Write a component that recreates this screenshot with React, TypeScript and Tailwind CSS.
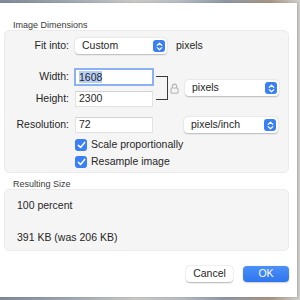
import React from 'react';

const font = { fontFamily: '"Liberation Sans", Arial, sans-serif' };

function Stepper() {
  return (
    <span className="flex h-[12px] w-[12px] items-center justify-center rounded-[3px] bg-[#3a7ff3]">
      <svg width="7" height="9" viewBox="0 0 7 9" fill="none">
        <path d="M1.2 3.4L3.5 1.2L5.8 3.4M1.2 5.6L3.5 7.8L5.8 5.6" stroke="white" strokeWidth="1.2" strokeLinecap="round" strokeLinejoin="round" />
      </svg>
    </span>
  );
}

function Popup({ label, width }: { label: string; width: string }) {
  return (
    <div className={`flex h-[16px] items-center justify-between rounded-[4px] bg-white pl-[7px] pr-[2px] shadow-[0_0.5px_1.5px_rgba(0,0,0,0.25)] ${width}`}>
      <span className="text-[10.5px] text-[#262626]">{label}</span>
      <Stepper />
    </div>
  );
}

function Field({ value, focused }: { value: string; focused?: boolean }) {
  return (
    <div
      className={`flex h-[16px] w-[78px] items-center bg-white pl-[3px] text-[10.5px] text-[#262626] ${
        focused ? 'outline-[2.5px] outline-solid outline-[#8db2f4] -outline-offset-[1px] border border-[#b9c9e6]' : 'border border-[#e2e2e2] border-t-[#d2d2d2]'
      }`}
    >
      {focused ? <span className="bg-[#b6cff7] leading-[12px]">{value}</span> : value}
    </div>
  );
}

function Check({ label }: { label: string }) {
  return (
    <div className="flex h-[12px] items-center gap-[4px] pl-[70px]">
      <span className="flex h-[12px] w-[12px] items-center justify-center rounded-[3px] bg-[#3a7ff3]">
        <svg width="9" height="8" viewBox="0 0 9 8" fill="none">
          <path d="M1.3 4.2L3.5 6.4L7.7 1.4" stroke="white" strokeWidth="1.5" strokeLinecap="round" strokeLinejoin="round" />
        </svg>
      </span>
      <span className="text-[10.5px] text-[#262626]">{label}</span>
    </div>
  );
}

function Label({ children }: { children: React.ReactNode }) {
  return <span className="w-[64px] text-right text-[10.5px] text-[#262626]">{children}</span>;
}

export default function App() {
  return (
    <div
      className="h-[300px] w-[300px] overflow-hidden pt-[3px]"
      style={{ ...font, background: 'linear-gradient(90deg, #7f8a99 0%, #9aa3ae 20%, #c9c9c6 45%, #b8bcc2 60%, #8e98a5 75%, #a89682 90%, #d0cfcc 100%)' }}
    >
      <div className="flex h-[294px] w-[297px] flex-col bg-white pt-[17px] shadow-[1px_0_2px_rgba(0,0,0,0.15)]">
        <div className="h-[10px] pl-[13px] text-[9px] leading-[10px] text-[#3a3a3a]">Image Dimensions</div>

        <div className="ml-[4px] flex h-[143px] w-[285px] flex-col rounded-[5px] border border-[#ebebeb] bg-[#f5f5f5]">
          <div className="mt-[7px] flex h-[16px] items-center gap-[6px]">
            <Label>Fit into:</Label>
            <Popup label="Custom" width="w-[92px]" />
            <span className="ml-[3px] text-[10.5px] text-[#262626]">pixels</span>
          </div>

          <div className="mt-[15px] flex items-center">
            <div className="flex flex-col gap-[6px]">
              <div className="flex items-center gap-[6px]">
                <Label>Width:</Label>
                <Field value="1608" focused />
              </div>
              <div className="flex items-center gap-[6px]">
                <Label>Height:</Label>
                <Field value="2300" />
              </div>
            </div>
            <div className="ml-[3px] h-[24px] w-[12px] border-y border-r border-[#3a3a3a]" />
            <svg className="ml-[2px]" width="9" height="11" viewBox="0 0 9 11" fill="none">
              <path d="M2.3 5V3.3a2.2 2.2 0 0 1 4.4 0V5" stroke="#b5b5b5" strokeWidth="1.1" />
              <rect x="1" y="5" width="7" height="5.3" rx="1" stroke="#b5b5b5" strokeWidth="1.1" />
            </svg>
            <div className="ml-[6px]">
              <Popup label="pixels" width="w-[94px]" />
            </div>
          </div>

          <div className="mt-[10px] flex h-[16px] items-center gap-[6px]">
            <Label>Resolution:</Label>
            <Field value="72" />
            <div className="ml-[25px]">
              <Popup label="pixels/inch" width="w-[94px]" />
            </div>
          </div>

          <div className="mt-[6px] flex flex-col gap-[5px]">
            <Check label="Scale proportionally" />
            <Check label="Resample image" />
          </div>
        </div>

        <div className="mt-[6px] h-[10px] pl-[13px] text-[9px] leading-[10px] text-[#3a3a3a]">Resulting Size</div>

        <div className="ml-[4px] flex h-[62px] w-[285px] flex-col rounded-[5px] border border-[#ebebeb] bg-[#f5f5f5] pl-[12px] text-[10.5px] text-[#262626]">
          <div className="mt-[9px] leading-[12px]">100 percent</div>
          <div className="mt-[20px] leading-[12px]">391 KB (was 206 KB)</div>
        </div>

        <div className="mt-[15px] flex justify-end gap-[10px] pr-[8px]">
          <button className="flex h-[16px] w-[47px] items-center justify-center rounded-[4px] bg-white text-[10.5px] text-[#262626] shadow-[0_0.5px_1.5px_rgba(0,0,0,0.3)]">
            Cancel
          </button>
          <button className="flex h-[16px] w-[46px] items-center justify-center rounded-[4px] bg-gradient-to-b from-[#4b8ff8] to-[#2f76ee] text-[10.5px] text-white shadow-[0_0.5px_1.5px_rgba(0,0,0,0.2)]">
            OK
          </button>
        </div>
      </div>
    </div>
  );
}
